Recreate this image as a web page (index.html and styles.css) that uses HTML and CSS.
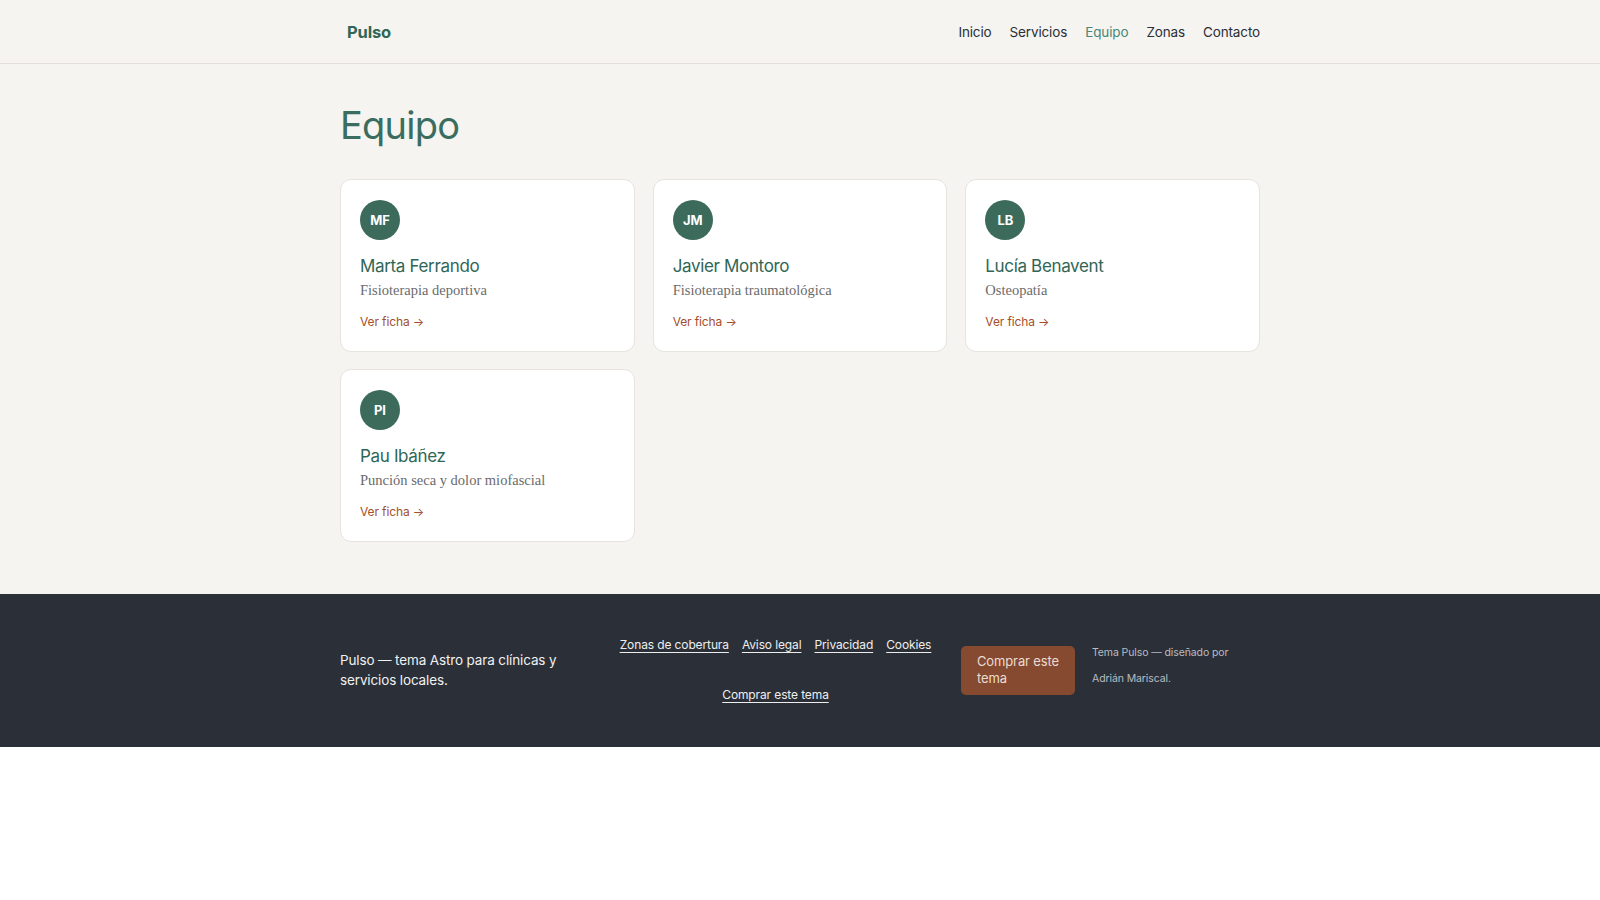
FILE: index.html
```html
<!DOCTYPE html>
<html lang="es">
<head>
<meta charset="utf-8">
<title>Equipo — Pulso</title>
<link rel="stylesheet" href="styles.css">
</head>
<body>
<header class="site-header">
  <div class="header-inner">
    <a class="logo" href="#">Pulso</a>
    <nav class="main-nav">
      <a href="#">Inicio</a>
      <a href="#">Servicios</a>
      <a href="#" class="active">Equipo</a>
      <a href="#">Zonas</a>
      <a href="#">Contacto</a>
    </nav>
  </div>
</header>
<main class="page">
  <div class="container">
    <h1 class="page-title">Equipo</h1>
    <div class="team-grid">
      <article class="card">
        <div class="avatar">MF</div>
        <h2 class="name">Marta Ferrando</h2>
        <p class="role">Fisioterapia deportiva</p>
        <a class="more" href="#">Ver ficha →</a>
      </article>
      <article class="card">
        <div class="avatar">JM</div>
        <h2 class="name">Javier Montoro</h2>
        <p class="role">Fisioterapia traumatológica</p>
        <a class="more" href="#">Ver ficha →</a>
      </article>
      <article class="card">
        <div class="avatar">LB</div>
        <h2 class="name">Lucía Benavent</h2>
        <p class="role">Osteopatía</p>
        <a class="more" href="#">Ver ficha →</a>
      </article>
      <article class="card">
        <div class="avatar">PI</div>
        <h2 class="name">Pau Ibáñez</h2>
        <p class="role">Punción seca y dolor miofascial</p>
        <a class="more" href="#">Ver ficha →</a>
      </article>
    </div>
  </div>
</main>
<footer class="site-footer">
  <div class="footer-inner">
    <p class="footer-about">Pulso — tema Astro para clínicas y servicios locales.</p>
    <nav class="footer-nav">
      <a href="#">Zonas de cobertura</a>
      <a href="#">Aviso legal</a>
      <a href="#">Privacidad</a>
      <a href="#">Cookies</a>
      <a href="#">Comprar este tema</a>
    </nav>
    <a class="buy-btn" href="#">Comprar este tema</a>
    <p class="credit">Tema Pulso — diseñado por Adrián Mariscal.</p>
  </div>
</footer>
</body>
</html>
```

FILE: styles.css
```css
* { box-sizing: border-box; }

html, body {
  margin: 0;
  padding: 0;
  background: #ffffff;
}

body {
  font-family: Inter, "Noto Sans", "Liberation Sans", sans-serif;
  color: #2b2f36;
}

a { text-decoration: none; color: inherit; }

.site-header {
  background: #f5f4f0;
  border-bottom: 1px solid #e2dfda;
}

.header-inner {
  max-width: 920px;
  margin: 0 auto;
  height: 63px;
  display: flex;
  align-items: center;
  justify-content: space-between;
}

.logo {
  padding-left: 7px;
  padding-top: 1px;
  font-size: 16.5px;
  font-weight: 700;
  color: #2f6656;
  letter-spacing: -0.01em;
}

.main-nav {
  display: flex;
  gap: 18px;
  font-size: 13.5px;
  letter-spacing: -0.01em;
}

.main-nav a { color: #2b2f36; }
.main-nav a.active { color: #4a8778; }

.page {
  background: #f5f4f0;
  padding: 37px 0 52px;
}

.container {
  max-width: 920px;
  margin: 0 auto;
}

.page-title {
  margin: 0 0 30px;
  font-size: 38px;
  line-height: 48px;
  font-weight: 400;
  color: #3a6d5f;
  letter-spacing: -0.02em;
}

.team-grid {
  display: grid;
  grid-template-columns: repeat(3, 1fr);
  gap: 17px 18px;
}

.card {
  background: #ffffff;
  border: 1px solid #e7e4df;
  border-radius: 11px;
  padding: 20px 19px 19px;
  display: flex;
  flex-direction: column;
  align-items: flex-start;
}

.avatar {
  width: 40px;
  height: 40px;
  border-radius: 50%;
  background: #3d6b5b;
  color: #ffffff;
  font-size: 13px;
  font-weight: 700;
  display: flex;
  align-items: center;
  justify-content: center;
  letter-spacing: -0.01em;
}

.name {
  margin: 14px 0 0;
  font-size: 17px;
  line-height: 24px;
  font-weight: 400;
  color: #2f6656;
  letter-spacing: -0.02em;
}

.role {
  margin: 2px 0 0;
  font-family: "Liberation Serif", "DejaVu Serif", serif;
  font-size: 14.5px;
  line-height: 20px;
  color: #6b6b6b;
}

.more {
  margin-top: 12px;
  font-size: 12px;
  line-height: 20px;
  color: #a34f2b;
  letter-spacing: -0.01em;
}

.site-footer {
  background: #2b2f37;
  padding: 41px 0 42px;
}

.footer-inner {
  max-width: 920px;
  margin: 0 auto;
  display: grid;
  grid-template-columns: 250px 1fr 114px 168px;
  column-gap: 17px;
  align-items: center;
}

.footer-about {
  margin: 0;
  font-size: 13.5px;
  line-height: 20.5px;
  color: #f1f1f1;
  letter-spacing: -0.01em;
}

.footer-nav {
  display: flex;
  flex-wrap: wrap;
  justify-content: center;
  column-gap: 13px;
  row-gap: 30px;
  font-size: 12px;
  line-height: 20px;
  letter-spacing: -0.01em;
}

.footer-nav a {
  color: #eeeeee;
  text-decoration: underline;
  text-underline-offset: 3px;
}

.buy-btn {
  display: block;
  background: #854a2f;
  color: #eadcd3;
  border-radius: 5px;
  padding: 7px 16px;
  font-size: 13px;
  line-height: 17.5px;
  letter-spacing: -0.01em;
}

.credit {
  margin: 0 0 8px;
  font-size: 10.5px;
  line-height: 26px;
  color: #b9bcc1;
  letter-spacing: -0.01em;
}
```
